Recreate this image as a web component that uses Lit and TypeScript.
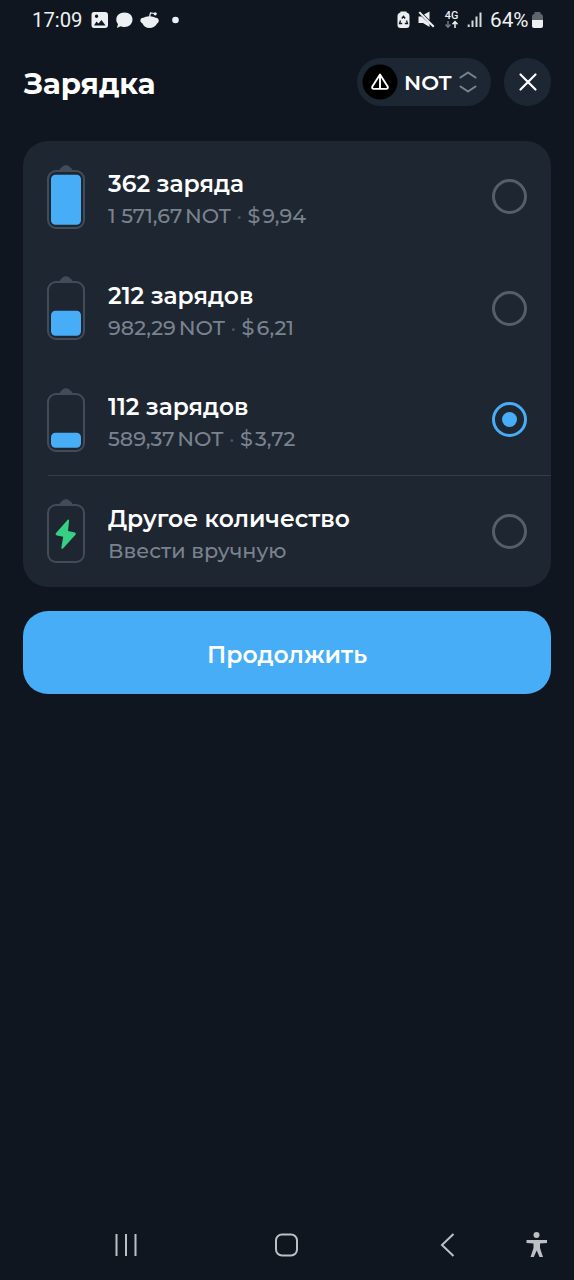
import { LitElement, html, svg, css, nothing } from "lit";
import { customElement, property, state } from "lit/decorators.js";

interface Pack {
  id: string;
  title: string;
  amount?: string;
  price?: string;
  note?: string;
  level: number;
  width: number;
  subWidth: number;
}

const packs: Pack[] = [
  { id: "large", title: "362 заряда", amount: "1 571,67", price: "9,94", level: 50, width: 136, subWidth: 198 },
  { id: "medium", title: "212 зарядов", amount: "982,29", price: "6,21", level: 25, width: 145.5, subWidth: 186 },
  { id: "small", title: "112 зарядов", amount: "589,37", price: "3,72", level: 15, width: 140.5, subWidth: 187.5 },
  { id: "custom", title: "Другое количество", note: "Ввести вручную", level: 0, width: 242, subWidth: 178.5 },
];

/* One line of text stretched to a given advance width. */
@customElement("wide-text")
export class WideText extends LitElement {
  @property({ type: Number }) width = 100;
  @state() private scale = 1;

  static styles = css`
    :host { display: block; white-space: pre; }
    .line { display: inline-block; transform-origin: 0 50%; }
  `;

  protected firstUpdated() {
    this.measure();
    document.fonts?.ready.then(() => this.measure());
  }

  private measure() {
    const line = this.renderRoot.querySelector<HTMLElement>(".line");
    if (line && line.offsetWidth) {
      const natural = parseFloat(getComputedStyle(line).width);
      this.scale = this.width / natural;
    }
  }

  render() {
    return html`<span class="line" style="transform: scaleX(${this.scale})"><slot></slot></span>`;
  }
}

@customElement("battery-icon")
export class BatteryIcon extends LitElement {
  @property({ type: Number }) level = 0;

  static styles = css`
    :host { display: block; width: 40px; height: 68px; }
    svg { display: block; }
  `;

  render() {
    const h = this.level;
    return html`<svg width="40" height="68" viewBox="0 0 40 68">
      <path d="M13.500 7.500C13.500 5.500 15 5.400 16.400 3.800C18 1.800 22 1.800 23.600 3.800C25 5.400 26.500 5.500 26.500 7.500Z" fill="#424c58"/>
      <rect x="2" y="8" width="36" height="57" rx="8" fill="none" stroke="#424c58" stroke-width="2"/>
      ${h > 0
        ? svg`<rect x="5" y=${61.8 - h} width="30" height=${h} rx="4.5" fill="#46adf6"/>`
        : svg`<path d="M21.5 23L9.8 36.3Q9 38 11 38.4L17.2 39.8L15.3 51Q15.5 52.4 17 51.4L29.7 37.5Q30.400 36 28.8 35.5L22 34L23.1 23.500Q22.8 22 21.5 23Z" fill="#37cf85"/>`}
    </svg>`;
  }
}

@customElement("app-root")
export class AppRoot extends LitElement {
  @state() private selected = "small";

  static styles = css`
    :host {
      display: flex; flex-direction: column; height: 1280px; overflow: hidden;
      background: #10161f; color: #fff; font-family: "Montserrat", "Inter", sans-serif;
    }
    svg { display: block; flex: none; }
    .status {
      height: 40px; flex: none; display: flex; justify-content: space-between; box-sizing: border-box;
      padding: 0 30px 0 32px; color: #edf0f2; font: 400 20.5px/40px "Roboto", sans-serif;
    }
    .side { display: flex; align-items: center; }
    .clock { width: 58px; }
    .percent { width: 39px; margin-left: 7px; margin-right: 2px; }
    header {
      height: 101px; flex: none; box-sizing: border-box; padding: 18px 23px 35px 24px;
      display: flex; align-items: center;
    }
    h1 { margin: 4px auto 0 0; font-size: 29px; line-height: 36px; font-weight: 700; width: 132px; }
    .currency {
      width: 134px; height: 48px; border-radius: 24px; background: #1d2633; box-sizing: border-box;
      padding: 0 13px 0 5px; display: flex; align-items: center; border: 0; color: inherit;
    }
    .ticker { font: 600 21px/26px "Montserrat", "Inter", sans-serif; width: 48px; margin: 2px 7px 0 6px; text-align: left; }
    .close {
      width: 47px; height: 48px; border-radius: 24px; margin-left: 13px; padding: 0; border: 0;
      background: #1d2633; display: grid; place-items: center;
    }
    .card { margin: 0 23px; height: 446px; flex: none; border-radius: 25px; background: #1e2631; display: grid; grid-template-rows: repeat(4, 1fr); }
    .row { display: flex; box-sizing: border-box; padding: 0 24px 0 23px; align-items: center; position: relative; }
    .row.divided::before { content: ""; position: absolute; top: -1px; left: 25px; right: 0; height: 1px; background: #343d48; }
    battery-icon { flex: none; }
    .copy { flex: 1; margin-left: 22px; padding-top: 7px; }
    .name { font-size: 23.5px; line-height: 32px; font-weight: 600; }
    .sub { font-size: 20.5px; line-height: 32px; font-weight: 500; color: #79828e; }
    .sep { color: #4d5763; }
    .radio { flex: none; width: 35px; height: 35px; border: 3px solid #555e69; border-radius: 50%; box-sizing: border-box; display: grid; place-items: center; }
    .radio.on { border-color: #46adf6; }
    .dot { width: 15px; height: 15px; border-radius: 50%; background: #46adf6; }
    .go {
      height: 83px; flex: none; margin: 24px 23px 0; border: 0; border-radius: 25px; padding: 4px 0 0; background: #46adf6; color: #fff;
      font: 600 23.5px/30px "Montserrat", "Inter", sans-serif; display: grid; place-items: center;
    }
    .go wide-text { width: 161px; text-align: left; }
    .nav { margin-top: auto; height: 71px; flex: none; display: grid; grid-template-columns: 112px 160px 162px 90px 1fr; align-items: center; }
    .nav svg:first-child { grid-column: 2; }
  `;

  private renderSub(p: Pack) {
    return p.note ?? html`${p.amount}\u2009NOT <span class="sep">·</span> $\u200a${p.price}`;
  }

  render() {
    return html`
      <div class="status">
        <div class="side">
          <wide-text class="clock" .width=${50.5}>17:09</wide-text>
          <svg width="100" height="24" viewBox="90 8 100 24">
            <path fill="#edf0f2" fill-rule="evenodd" d="M94 12H105Q108 12 108 15V25Q108 28 105 28H94Q91.500 28 91.500 25V15Q91.500 12 94 12ZM94 25.500H105.500L101.500 20L98.500 23.500L96.500 21.500ZM96.500 14.500A1.700 1.700 0 1 0 96.600 14.500Z"/>
            <path fill="#edf0f2" d="M124.500 12.500C129.500 12.500 132.500 15.500 132.500 19.500C132.500 24 129 27 124.500 27C122.700 27 121.500 26.800 120.500 26.200L117 28L118 24C116.800 22.800 116.300 21.300 116.300 19.500C116.300 15.500 119.500 12.500 124.500 12.500Z"/>
            <path fill="#edf0f2" d="M141 18.500C142.500 17.500 144 18 145 17Q149.500 15.500 154 17C155 18 156.500 17.500 158 18.500C159.500 21 158.500 23 157 23.500C155.500 26.300 153 28 149.500 28S143.500 26 142.500 23.500C140.500 22.500 139.700 20.500 141 18.500Z"/>
            <path d="M149.500 17L150.500 13L154.500 13.500" fill="none" stroke="#edf0f2" stroke-width="1.200"/>
            <circle cx="155.200" cy="13.800" r="1.600" fill="#edf0f2"/>
            <circle cx="175.500" cy="20" r="3.300" fill="#edf0f2"/>
          </svg>
        </div>
        <div class="side">
          <svg width="88" height="26" viewBox="395.500 7 88 26">
            <path fill="#edf0f2" d="M401 12.500V11.500H407V12.500Q410 13 410 16V25Q410 28 407 28H401Q398 28 398 25V16Q398 13 401 12.500Z"/>
            <path d="M402.300 18.500L404 16.300L405.700 18.500M407 20.500L408 23.500H405.300M402.700 23.500H400L401 20.500" fill="none" stroke="#10161f" stroke-width="1.300"/>
            <path fill="#edf0f2" d="M419 16.500H422L430 24V27L423.500 23H419ZM419 12.800L420.500 11.500L435 26L433.500 27.500ZM424.500 14.500L430 11.500V20Z"/>
            <text x="445.300" y="19" font-family="Roboto, sans-serif" font-size="10" font-weight="500" fill="#edf0f2" textLength="13.500" lengthAdjust="spacingAndGlyphs">4G</text>
            <path d="M448.500 21V27M446 24.500L448.500 27.200L451 24.500" fill="none" stroke="#777d85" stroke-width="1.400"/>
            <path d="M455.500 28V22M453 24.300L455.500 21.700L458 24.300" fill="none" stroke="#edf0f2" stroke-width="1.500"/>
            <path d="M469.200 24.500V27M473 20.500V27M477 16.500V27M481 12.500V27" stroke="#edf0f2" stroke-width="2" stroke-opacity=".9"/>
          </svg>
          <wide-text class="percent" .width=${38.5}>64%</wide-text>
          <svg width="13" height="24" viewBox="0 0 13 24">
            <path d="M3.500 4H9.500V6Q12 6 12 9V13H1V9Q1 6 3.500 6Z" fill="#60656b"/>
            <path d="M1 12H12V18Q12 20 10 20H3Q1 20 1 18Z" fill="#edf0f2"/>
          </svg>
        </div>
      </div>
      <header>
        <h1><wide-text .width=${131.5}>Зарядка</wide-text></h1>
        <button class="currency">
          <svg width="36" height="36" viewBox="0 0 36 36">
            <circle cx="18" cy="18" r="17.500" fill="#000"/>
            <path d="M18 10.500L10.300 22.500Q9.600 24.800 11.800 24.900H24.200Q26.400 24.800 25.700 22.500Z M18 11V24.500" fill="none" stroke="#fff" stroke-width="1.900" stroke-linejoin="round"/>
          </svg>
          <wide-text class="ticker" .width=${47.5}>NOT</wide-text>
          <svg width="18" height="24" viewBox="0 0 18 24">
            <path d="M1.500 7.500L9 2.500L16.500 7.500M1.500 16.500L9 21.500L16.500 16.500" fill="none" stroke="#7b848e" stroke-width="2.100" stroke-linecap="round" stroke-linejoin="round"/>
          </svg>
        </button>
        <button class="close">
          <svg width="20" height="20" viewBox="0 0 20 20"><path d="M2.500 2.500L17.500 17.500M17.500 2.500L2.500 17.500" stroke="#fff" stroke-width="2.200" stroke-linecap="round"/></svg>
        </button>
      </header>
      <div class="card">
        ${packs.map(
          (p) => html`<div class="row ${p.id === "custom" ? "divided" : ""}" @click=${() => (this.selected = p.id)}>
            <battery-icon .level=${p.level}></battery-icon>
            <div class="copy">
              <wide-text class="name" .width=${p.width}>${p.title}</wide-text>
              <wide-text class="sub" .width=${p.subWidth}>${this.renderSub(p)}</wide-text>
            </div>
            <div class="radio ${this.selected === p.id ? "on" : ""}">
              ${this.selected === p.id ? html`<div class="dot"></div>` : nothing}
            </div>
          </div>`
        )}
      </div>
      <button class="go"><wide-text .width=${160}>Продолжить</wide-text></button>
      <div class="nav">
        <svg width="28" height="26" viewBox="0 0 28 26"><path d="M4.500 2V24M14 2V24M23.500 2V24" stroke="#bcbfc3" stroke-width="2"/></svg>
        <svg width="28" height="26" viewBox="0 0 28 26"><rect x="4" y="2.500" width="21" height="21" rx="6" fill="none" stroke="#bcbfc3" stroke-width="2"/></svg>
        <svg width="24" height="26" viewBox="0 0 24 26"><path d="M19.500 2L8 13L19.500 24" fill="none" stroke="#bcbfc3" stroke-width="2"/></svg>
        <svg width="26" height="28" viewBox="0 0 26 28"><g fill="#bcbfc3"><circle cx="12.500" cy="4" r="3"/><path d="M2.500 9H23V12L16 12.500V17L19 26H15.500L12.700 19.500L9.800 26H6.500L9.500 17V12.500L2.500 12Z"/></g></svg>
      </div>
    `;
  }
}
